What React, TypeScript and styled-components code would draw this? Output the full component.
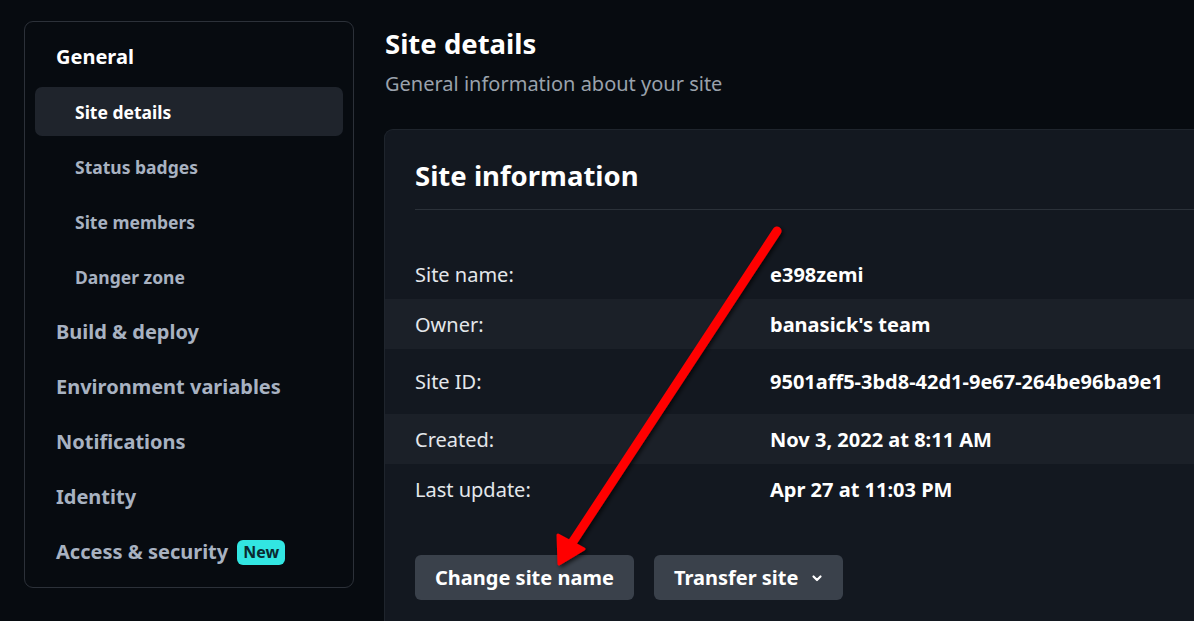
import React from "react";
import styled, { createGlobalStyle } from "styled-components";

const Global = createGlobalStyle`
  html, body { margin: 0; padding: 0; background: #070b10; }
  body { font-family: "Noto Sans", "Open Sans", sans-serif; color: #fff; overflow: hidden; }
  * { box-sizing: border-box; }
`;

const Page = styled.div`
  position: relative;
  width: 1194px;
  height: 621px;
  display: flex;
  align-items: flex-start;
  gap: 30px;
  padding: 21px 0 0 24px;
  overflow: hidden;
`;

const Sidebar = styled.nav`
  width: 330px;
  flex: none;
  border: 1px solid #2c3139;
  border-radius: 9px;
  padding: 20px 10px 8px 10px;
  display: flex;
  flex-direction: column;
`;

const NavTop = styled.div<{ $active?: boolean }>`
  height: 55px;
  display: flex;
  align-items: center;
  padding-left: 21px;
  font-size: 20px;
  font-weight: 700;
  color: ${(p) => (p.$active ? "#ffffff" : "#a8b2c1")};
  gap: 9px;
  &:first-child { height: 31px; align-items: flex-start; padding-top: 1px; }
`;

const SubList = styled.div`
  display: flex;
  flex-direction: column;
  margin-top: 14px;
`;

const NavSub = styled.div<{ $active?: boolean }>`
  height: ${(p) => (p.$active ? "49px" : "55px")};
  margin-bottom: ${(p) => (p.$active ? "3px" : "0")};
  display: flex;
  align-items: center;
  padding-left: 40px;
  font-size: 17.5px;
  font-weight: 700;
  border-radius: 7px;
  background: ${(p) => (p.$active ? "#1f242c" : "transparent")};
  color: ${(p) => (p.$active ? "#ffffff" : "#a8b2c1")};
`;

const Badge = styled.span`
  background: #32e6e2;
  color: #0a2a30;
  font-size: 16px;
  font-weight: 700;
  border-radius: 6px;
  padding: 0 6px;
  height: 25px;
  line-height: 25px;
  margin-top: 1px;
`;

const Main = styled.main`
  flex: 1;
  display: flex;
  flex-direction: column;
  padding-top: 6px;
`;

const Title = styled.h1`
  margin: 0;
  font-size: 27.5px;
  font-weight: 700;
  line-height: 34px;
  padding-left: 1px;
`;

const Subtitle = styled.p`
  margin: 10px 0 0 1px;
  font-size: 20px;
  color: #9aa2ac;
  line-height: 26px;
`;

const Card = styled.section`
  margin-top: 32px;
  background: #131820;
  border: 1px solid #1f252d;
  border-right: none;
  border-radius: 9px 0 0 0;
  display: flex;
  flex-direction: column;
  height: 520px;
`;

const CardHead = styled.div`
  margin: 0 0 0 30px;
  padding: 27px 0 14px 0;
  border-bottom: 1px solid #2b3139;
  font-size: 27.5px;
  font-weight: 700;
  line-height: 38px;
`;

const Rows = styled.div`
  margin-top: 39px;
  display: flex;
  flex-direction: column;
`;

const Row = styled.div<{ $alt?: boolean; $h: number }>`
  height: ${(p) => p.$h}px;
  display: grid;
  grid-template-columns: 355px 1fr;
  align-items: center;
  padding-left: 30px;
  background: ${(p) => (p.$alt ? "#1b2028" : "transparent")};
  font-size: 20px;
`;

const Label = styled.span`
  color: #e4e7eb;
`;

const Value = styled.span`
  font-weight: 700;
  color: #ffffff;
`;

const Actions = styled.div`
  margin: 41px 0 0 30px;
  display: flex;
  gap: 20px;
`;

const Button = styled.button`
  height: 45px;
  border: none;
  border-radius: 6px;
  background: #3a414b;
  color: #ffffff;
  font-family: "Noto Sans", "Open Sans", sans-serif;
  font-size: 20px;
  font-weight: 700;
  padding: 0 20px;
  display: flex;
  align-items: center;
  gap: 13px;
`;

const ArrowOverlay = styled.svg`
  position: absolute;
  left: 0;
  top: 0;
  pointer-events: none;
`;

const rows: [string, string, number][] = [
  ["Site name:", "e398zemi", 50],
  ["Owner:", "banasick's team", 50],
  ["Site ID:", "9501aff5-3bd8-42d1-9e67-264be96ba9e1", 65],
  ["Created:", "Nov 3, 2022 at 8:11 AM", 50],
  ["Last update:", "Apr 27 at 11:03 PM", 50],
];

export default function App() {
  return (
    <>
      <Global />
      <Page>
        <Sidebar>
          <NavTop $active>General</NavTop>
          <SubList>
            <NavSub $active>Site details</NavSub>
            <NavSub>Status badges</NavSub>
            <NavSub>Site members</NavSub>
            <NavSub>Danger zone</NavSub>
          </SubList>
          <NavTop>Build &amp; deploy</NavTop>
          <NavTop>Environment variables</NavTop>
          <NavTop>Notifications</NavTop>
          <NavTop>Identity</NavTop>
          <NavTop>
            Access &amp; security <Badge>New</Badge>
          </NavTop>
        </Sidebar>
        <Main>
          <Title>Site details</Title>
          <Subtitle>General information about your site</Subtitle>
          <Card>
            <CardHead>Site information</CardHead>
            <Rows>
              {rows.map(([l, v, h], i) => (
                <Row key={l} $alt={i % 2 === 1} $h={h}>
                  <Label>{l}</Label>
                  <Value>{v}</Value>
                </Row>
              ))}
            </Rows>
            <Actions>
              <Button>Change site name</Button>
              <Button>
                Transfer site
                <svg width="12" height="12" viewBox="0 0 12 12">
                  <path d="M2.5 4.5 L6 8 L9.5 4.5" fill="none" stroke="#fff" strokeWidth="2.2" strokeLinecap="round" strokeLinejoin="round" />
                </svg>
              </Button>
            </Actions>
          </Card>
        </Main>
        <ArrowOverlay width="1194" height="621" viewBox="0 0 1194 621">
          <defs>
            <filter id="sh" x="-20%" y="-20%" width="140%" height="140%">
              <feDropShadow dx="2" dy="2" stdDeviation="2" floodColor="#000" floodOpacity="0.7" />
            </filter>
          </defs>
          <g filter="url(#sh)">
            <line x1="777" y1="231" x2="572" y2="543" stroke="#ff0000" strokeWidth="9" strokeLinecap="round" />
            <path d="M558 535 L584 549 L559 564 Z" fill="#ff0000" stroke="#ff0000" strokeWidth="3" strokeLinejoin="round" />
          </g>
        </ArrowOverlay>
      </Page>
    </>
  );
}
